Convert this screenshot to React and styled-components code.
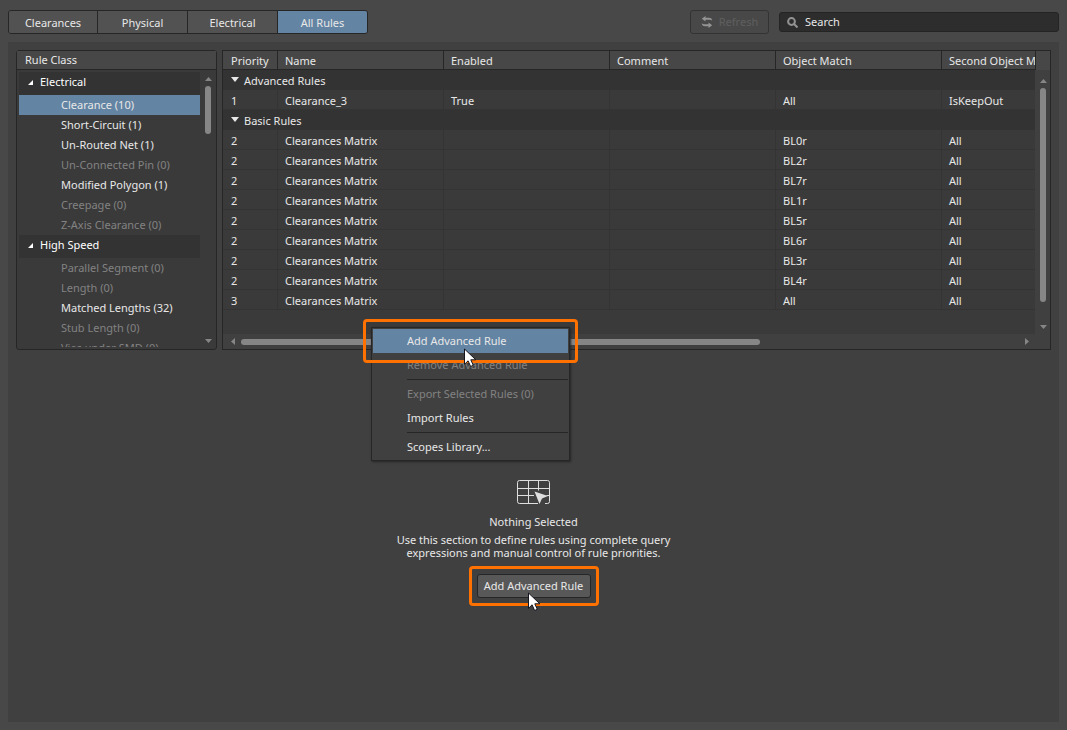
import React from "react";
import styled, { createGlobalStyle, css } from "styled-components";

const c = {
  page: "#484848",
  panel: "#404040",
  list: "#3a3a3a",
  group: "#333333",
  header: "#474747",
  line: "#262626",
  grid: "#343434",
  accent: "#6384a3",
  text: "#e8e8e8",
  dim: "#828282",
  thumb: "#868686",
  callout: "#ff7100",
};

const GlobalStyle = createGlobalStyle`
  * { box-sizing: border-box; }
  body {
    margin: 0;
    background: ${c.page};
    color: ${c.text};
    font-family: "Noto Sans", "Open Sans", sans-serif;
    font-size: 11px;
    line-height: 20px;
  }
  button, input { font: inherit; color: inherit; }
  button { padding: 0; border: 0; background: none; }
  ul { margin: 0; padding: 0; list-style: none; }
`;

const Page = styled.div`
  display: flex;
  flex-direction: column;
  min-height: 100vh;
  padding: 10px 8px 8px;
  gap: 8px;
`;

const Toolbar = styled.header`
  display: flex;
  align-items: center;
  gap: 10px;
`;

const Tabs = styled.nav`
  display: flex;
  margin-right: auto;
  border: 1px solid ${c.line};
  border-radius: 3px;
  overflow: hidden;
`;

const Tab = styled.button`
  width: 90px;
  height: 22px;
  padding-top: 2px;
  background: ${(p) => (p.$active ? c.accent : "#525252")};
  & + & { border-left: 1px solid ${c.line}; }
  &:first-child { width: 88px; }
`;

const RefreshButton = styled.button`
  display: flex;
  align-items: center;
  justify-content: center;
  gap: 6px;
  width: 79px;
  height: 24px;
  border: 1px solid #333333;
  border-radius: 3px;
  color: #5f5f5f;
`;

const SearchBox = styled.label`
  display: flex;
  align-items: center;
  gap: 7px;
  width: 280px;
  height: 20px;
  padding: 0 7px;
  border: 1px solid #242424;
  border-radius: 3px;
  background: #2d2d2d;
`;

const SearchInput = styled.input`
  flex: 1;
  min-width: 0;
  padding: 0;
  border: 0;
  outline: 0;
  background: none;
  &::placeholder { color: ${c.text}; opacity: 1; }
`;

const Workspace = styled.main`
  flex: 1;
  padding: 8px;
  background: ${c.panel};
`;

const Split = styled.div`
  position: relative;
  display: flex;
  gap: 5px;
  height: 300px;
`;

const Sidebar = styled.aside`
  display: flex;
  flex-direction: column;
  width: 201px;
  border: 1px solid ${c.line};
  border-radius: 3px;
  background: ${c.list};
`;

const SidebarTitle = styled.div`
  height: 19px;
  padding-left: 8px;
  line-height: 18px;
  background: ${c.header};
  border-bottom: 1px solid ${c.line};
`;

const SidebarBody = styled.div`
  display: flex;
  flex: 1;
  min-height: 0;
  padding: 2px 0 2px 2px;
`;

const Tree = styled.ul`
  flex: 1;
  overflow: hidden;
`;

const TreeGroup = styled.button`
  display: flex;
  align-items: center;
  gap: 7px;
  width: 100%;
  height: 23px;
  padding: 0 0 3px 9px;
  background: ${c.group};
  color: #ffffff;
`;

const TreeItem = styled.button`
  display: block;
  width: 100%;
  height: 20px;
  padding-left: 42px;
  text-align: left;
  white-space: nowrap;
  color: ${(p) => (p.$dim ? c.dim : c.text)};
  background: ${(p) => (p.$active ? c.accent : "none")};
`;

const Scrollbar = styled.div`
  display: flex;
  align-items: center;
  justify-content: space-between;
  color: ${c.thumb};
  ${(p) =>
    p.$vertical
      ? css`
          flex-direction: column;
          width: ${p.$wide ? 14 : 16}px;
          padding: ${p.$wide ? "9px 0 5px" : "5px 0 4px"};
        `
      : css`
          height: 15px;
          padding: 0 6px 0 8px;
        `}
`;

const Track = styled.div`
  display: flex;
  flex: 1;
  ${(p) =>
    p.$vertical
      ? css`flex-direction: column; margin: 5px 0;`
      : css`margin: 0 6px;`}
`;

const Thumb = styled.div`
  flex: 0 0 ${(p) => p.$size};
  border-radius: 3px;
  background: ${c.thumb};
  ${(p) => (p.$vertical ? "width: 6px;" : "height: 6px;")}
`;

const GridFrame = styled.section`
  display: flex;
  flex: 1;
  flex-direction: column;
  min-width: 0;
  border: 1px solid ${c.line};
  background: ${c.panel};
`;

const GridBody = styled.div`
  display: flex;
  flex: 1;
  min-height: 0;
`;

const GridView = styled.div`
  flex: 1;
  min-width: 0;
  overflow: hidden;
  background: ${c.list};
`;

const RuleTable = styled.table`
  width: 885px;
  table-layout: fixed;
  border-collapse: separate;
  border-spacing: 0;
`;

const HeadCell = styled.th`
  width: ${(p) => p.$width}px;
  height: 19px;
  padding: 0 0 0 7px;
  border-right: 1px solid ${c.line};
  border-bottom: 1px solid ${c.line};
  background: ${c.header};
  font-weight: 400;
  line-height: 18px;
  padding-top: 2px;
  line-height: 16px;
  text-align: left;
  white-space: nowrap;
  &:first-child { padding-left: 8px; }
`;

const Cell = styled.td`
  height: 20px;
  padding: 2px 0 0 7px;
  border-right: 1px solid ${c.grid};
  border-bottom: 1px solid ${c.grid};
  line-height: 17px;
  &:first-child { padding-left: 8px; }
`;

const GroupCell = styled.th`
  height: 20px;
  padding: 0 0 0 8px;
  background: ${c.group};
  font-weight: 400;
  text-align: left;
`;

const GroupToggle = styled.button`
  display: flex;
  align-items: center;
  gap: 5px;
  height: 20px;
  line-height: 18px;
  svg { margin-bottom: 2px; }
  span { padding-top: 2px; }
`;

const Menu = styled.div`
  position: absolute;
  top: 277px;
  left: 355px;
  width: 199px;
  padding: 1px;
  border: 1px solid ${c.line};
  background: ${c.panel};
  box-shadow: 1px 1px 2px #262626;
`;

const MenuItem = styled.button`
  display: block;
  width: 100%;
  height: 24px;
  padding-left: 34px;
  text-align: left;
  color: ${(p) => (p.disabled ? c.dim : c.text)};
  background: ${(p) => (p.$active ? c.accent : "none")};
`;

const MenuRule = styled.hr`
  height: 1px;
  margin: 2px 0 2px 34px;
  border: 0;
  background: ${c.line};
`;

const MenuCallout = styled.div`
  position: absolute;
  top: -9px;
  left: -9px;
  width: 215px;
  height: 44px;
  border: 3px solid ${c.callout};
  border-radius: 4px;
  pointer-events: none;
`;

const Pointer = styled.svg`
  position: absolute;
  top: ${(p) => p.$top}px;
  left: ${(p) => p.$left}px;
  pointer-events: none;
`;

const EmptyState = styled.section`
  display: flex;
  flex-direction: column;
  align-items: center;
  padding: 129px 0 16px;
  text-align: center;
`;

const EmptyTitle = styled.h2`
  margin: 7px 0 1px;
  font-size: 11px;
  font-weight: 400;
`;

const EmptyText = styled.p`
  width: 290px;
  margin: 0 0 7px;
  line-height: 13px;
`;

const ButtonCallout = styled.div`
  position: relative;
  padding: 5px;
  border: 3px solid ${c.callout};
  border-radius: 4px;
`;

const AddButton = styled.button`
  display: block;
  width: 114px;
  height: 24px;
  border: 1px solid ${c.line};
  border-radius: 3px;
  background: #585858;
`;

const arrows = {
  up: [7, 4, "M0 4 3.500 0 7 4z"],
  down: [7, 4, "M0 0h7L3.500 4z"],
  left: [4, 7, "M4 0v7L0 3.500z"],
  right: [4, 7, "M0 0v7l4-3.500z"],
  open: [8, 5, "M0 0h8L4 5z"],
  corner: [5, 5, "M5 0v5H0z"],
};

function Arrow({ dir }) {
  const [w, h, d] = arrows[dir];
  return (
    <svg width={w} height={h} viewBox={`0 0 ${w} ${h}`} aria-hidden="true">
      <path d={d} fill="currentColor" />
    </svg>
  );
}

function Cursor({ top, left }) {
  return (
    <Pointer $top={top} $left={left} width="13" height="20" viewBox="0 0 13 20" aria-hidden="true">
      <path
        d="M.5 1v15.300l3.600-3.500 2.500 5.700 2.700-1.200-2.500-5.500h5z"
        fill="#fff"
        stroke="#15151f"
        strokeWidth="1"
      />
    </Pointer>
  );
}

function RefreshIcon() {
  return (
    <svg width="12" height="12" viewBox="0 0 12 12" fill="#949494" aria-hidden="true">
      <path d="M4.500 0v1.700H8c2 0 3 1 3.300 3C10.300 3.900 9.500 3.700 8 3.700H4.500v1.800L.8 2.700z" />
      <path d="M7.500 12v-1.700H4c-2 0-3-1-3.300-3C1.700 8.100 2.500 8.300 4 8.300h3.500V6.500l3.700 2.800z" />
    </svg>
  );
}

function SearchIcon() {
  return (
    <svg width="11" height="11" viewBox="0 0 11 11" fill="none" stroke="#939393" strokeWidth="2" aria-hidden="true">
      <circle cx="4.500" cy="4.500" r="3.400" />
      <path d="M7 7l3.500 3.500" />
    </svg>
  );
}

function GridIcon() {
  return (
    <svg width="33" height="26" viewBox="0 0 33 26" fill="none" stroke="#dedede" aria-hidden="true">
      <path
        d="M21 24.500H2.500a2 2 0 0 1-2-2V3.500a2 2 0 0 1 2-2H30.500a2 2 0 0 1 2 2v19a2 2 0 0 1-2 2H28M1 9.500h31M1 16.500h16M29.500 16.500h3M11.500 1.500v23M21.500 1.500v10"
      />
      <path d="M17.500 12.500 31 17l-6 2.500-2.500 5.500z" fill="#dedede" stroke="none" />
    </svg>
  );
}

const tree = [
  {
    name: "Electrical",
    items: [
      ["Clearance", 10],
      ["Short-Circuit", 1],
      ["Un-Routed Net", 1],
      ["Un-Connected Pin", 0],
      ["Modified Polygon", 1],
      ["Creepage", 0],
      ["Z-Axis Clearance", 0],
    ],
  },
  {
    name: "High Speed",
    items: [
      ["Parallel Segment", 0],
      ["Length", 0],
      ["Matched Lengths", 32],
      ["Stub Length", 0],
      ["Vias under SMD", 0],
    ],
  },
];

const columns = [
  ["Priority", 55],
  ["Name", 166],
  ["Enabled", 166],
  ["Comment", 166],
  ["Object Match", 166],
  ["Second Object Match", 166],
];

const matrix = (priority, match) => [priority, "Clearances Matrix", "", "", match, "All"];

const groups = [
  { name: "Advanced Rules", rows: [[1, "Clearance_3", "True", "", "All", "IsKeepOut"]] },
  {
    name: "Basic Rules",
    rows: [
      ...["BL0r", "BL2r", "BL7r", "BL1r", "BL5r", "BL6r", "BL3r", "BL4r"].map((m) => matrix(2, m)),
      matrix(3, "All"),
    ],
  },
];

function RuleClasses() {
  return (
    <Sidebar>
      <SidebarTitle>Rule Class</SidebarTitle>
      <SidebarBody>
        <Tree>
          {tree.map((group) => (
            <li key={group.name}>
              <TreeGroup>
                <Arrow dir="corner" />
                {group.name}
              </TreeGroup>
              <ul>
                {group.items.map(([name, count]) => (
                  <li key={name}>
                    <TreeItem $dim={count === 0} $active={name === "Clearance"}>
                      {`${name} (${count})`}
                    </TreeItem>
                  </li>
                ))}
              </ul>
            </li>
          ))}
        </Tree>
        <Scrollbar $vertical>
          <Arrow dir="up" />
          <Track $vertical>
            <Thumb $vertical $size="48px" />
          </Track>
          <Arrow dir="down" />
        </Scrollbar>
      </SidebarBody>
    </Sidebar>
  );
}

function RuleGrid() {
  return (
    <GridFrame>
      <GridBody>
        <GridView>
          <RuleTable>
            <thead>
              <tr>
                {columns.map(([name, width]) => (
                  <HeadCell key={name} $width={width} scope="col">{name}</HeadCell>
                ))}
              </tr>
            </thead>
            {groups.map((group) => (
              <tbody key={group.name}>
                <tr>
                  <GroupCell colSpan={6} scope="rowgroup">
                    <GroupToggle>
                      <Arrow dir="open" />
                      <span>{group.name}</span>
                    </GroupToggle>
                  </GroupCell>
                </tr>
                {group.rows.map((row, i) => (
                  <tr key={i}>
                    {row.map((value, j) => <Cell key={j}>{value}</Cell>)}
                  </tr>
                ))}
              </tbody>
            ))}
          </RuleTable>
        </GridView>
        <GridScroll />
      </GridBody>
      <Scrollbar>
        <Arrow dir="left" />
        <Track>
          <Thumb $size="calc(100% * 2 / 3)" />
        </Track>
        <Arrow dir="right" />
        <ScrollCorner />
      </Scrollbar>
    </GridFrame>
  );
}

const ScrollCorner = styled.div`
  width: 15px;
`;

const GridScrollColumn = styled.div`
  display: flex;
  flex-direction: column;
  width: 15px;
`;

const GridScrollHead = styled.div`
  height: 19px;
  border-left: 1px solid ${c.line};
  background: ${c.header};
`;

const GridScrollArea = styled.div`
  display: flex;
  flex: 1;
  justify-content: flex-end;
`;

function GridScroll() {
  return (
    <GridScrollColumn>
      <GridScrollHead />
      <GridScrollArea>
        <Scrollbar $vertical $wide>
          <Arrow dir="up" />
          <Track $vertical>
            <Thumb $vertical $size="214px" />
          </Track>
          <Arrow dir="down" />
        </Scrollbar>
      </GridScrollArea>
    </GridScrollColumn>
  );
}

function ContextMenu() {
  return (
    <Menu>
      <MenuItem $active>Add Advanced Rule</MenuItem>
      <MenuItem disabled>Remove Advanced Rule</MenuItem>
      <MenuRule />
      <MenuItem disabled>Export Selected Rules (0)</MenuItem>
      <MenuItem>Import Rules</MenuItem>
      <MenuRule />
      <MenuItem>Scopes Library...</MenuItem>
      <MenuCallout />
      <Cursor top={20} left={92} />
    </Menu>
  );
}

export default function App() {
  return (
    <>
      <GlobalStyle />
      <Page>
        <Toolbar>
          <Tabs>
            <Tab>Clearances</Tab>
            <Tab>Physical</Tab>
            <Tab>Electrical</Tab>
            <Tab $active>All Rules</Tab>
          </Tabs>
          <RefreshButton disabled>
            <RefreshIcon />
            Refresh
          </RefreshButton>
          <SearchBox>
            <SearchIcon />
            <SearchInput type="text" placeholder="Search" aria-label="Search" />
          </SearchBox>
        </Toolbar>
        <Workspace>
          <Split>
            <RuleClasses />
            <RuleGrid />
            <ContextMenu />
          </Split>
          <EmptyState>
            <GridIcon />
            <EmptyTitle>Nothing Selected</EmptyTitle>
            <EmptyText>
              Use this section to define rules using complete query expressions and manual control of rule priorities.
            </EmptyText>
            <ButtonCallout>
              <AddButton>Add Advanced Rule</AddButton>
              <Cursor top={23} left={56} />
            </ButtonCallout>
          </EmptyState>
        </Workspace>
      </Page>
    </>
  );
}
